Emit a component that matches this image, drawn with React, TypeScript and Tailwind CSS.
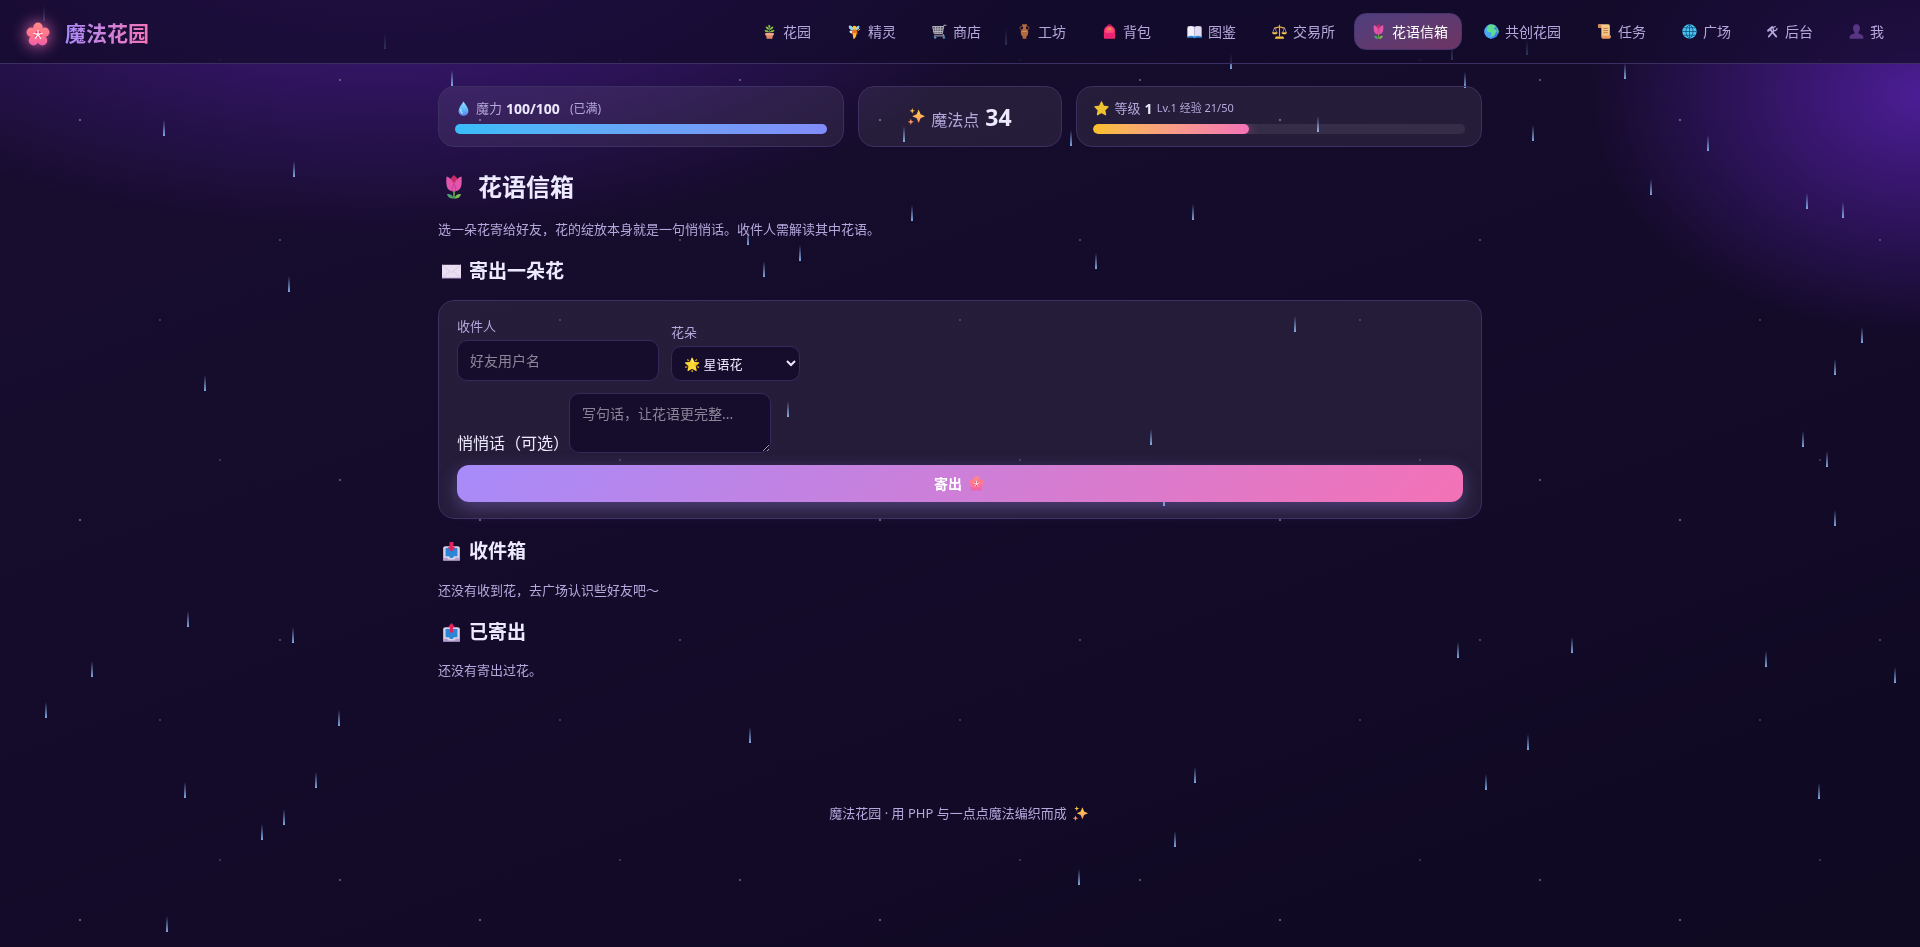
import { useId, type ReactNode } from "react"

interface IconProps {
	className?: string
}

function Blossom({ className = "size-[15px]" }: IconProps) {
	const id = useId()
	return (
		<svg viewBox="0 0 24 24" className={className} aria-hidden="true">
			<defs>
				<linearGradient id={id} x1="0" y1="0" x2="0" y2="24" gradientUnits="userSpaceOnUse">
					<stop offset="0" stopColor="#ff8a8a" />
					<stop offset="0.6" stopColor="#ff7390" />
					<stop offset="1" stopColor="#ee5cab" />
				</linearGradient>
			</defs>
			<g fill={`url(#${id})`}>
				<circle cx="12" cy="5.2" r="4.7" />
				<circle cx="5.2" cy="10.3" r="4.7" />
				<circle cx="18.8" cy="10.3" r="4.7" />
				<circle cx="7.6" cy="18.6" r="4.9" />
				<circle cx="16.4" cy="18.6" r="4.9" />
				<circle cx="12" cy="12.6" r="5" />
			</g>
			<circle cx="12" cy="12.6" r="3.6" fill="#f8486e" />
			<g stroke="#fff" strokeWidth="1.1" strokeLinecap="round">
				<path d="M12 12.6V8.2M12 12.6l4.2-1.3M12 12.6l2.6 3.8M12 12.6l-2.6 3.8M12 12.6l-4.2-1.3" />
			</g>
			<circle cx="12" cy="12.6" r="1.4" fill="#ffe3ee" />
		</svg>
	)
}

function Pot() {
	return (
		<svg viewBox="0 0 24 24" className="size-[15px]" aria-hidden="true">
			<path d="M12 15V4" stroke="#4a7a2a" strokeWidth="1.6" />
			<path d="M12 6c-2-1-3-3-1-5 3 1 3 3 1 5M11.5 9C8 9 5.5 7 6 4c3 0 5 2 5.5 5M12.5 9c3.5 0 6-2 5.5-5-3 0-5 2-5.5 5M11.500 13C7 14 4.5 12 4 9.5c4-.5 6.5 1 7.5 3.5M12.5 13c4.5 1 7-1 7.5-3.500-4-.5-6.5 1-7.5 3.5" fill="#86c440" />
			<path d="M5.5 14.5h13V18H17.5l-1 5.5h-9l-1-5.500H5.5z" fill="#dd8a6b" />
			<path d="M5.5 14.5h13V18h-13z" fill="#f3a788" />
		</svg>
	)
}

function Fairy() {
	return (
		<svg viewBox="0 0 24 24" className="size-[15px]" aria-hidden="true">
			<path d="M11 9C9 3 5 1 3 3c-1 4 3 8 8 6zM13 9c2-6 6-8 7-5 0 4-3 7-7 5z" fill="#8fd4f5" />
			<path d="M4 11c3-1 5-1 7 0l-3 4c-3 0-4-2-4-4" fill="#cfeeff" />
			<circle cx="12" cy="6" r="3.4" fill="#ffc83d" />
			<path d="M8.500 9.500h7L17 16l-4 2-5-2z" fill="#e8731c" />
			<path d="M9 15l5-1 1 5-3 4.500h-2z" fill="#fbb83a" />
			<path d="M17 11l4-3" stroke="#ffc83d" strokeWidth="1.5" />
		</svg>
	)
}

function Cart() {
	return (
		<svg viewBox="0 0 24 24" className="size-[15px]" aria-hidden="true">
			<path d="M1 4h17l-1.500 11.500H3.500z" fill="#55525f" />
			<path d="M1 4h17M2 8h15.500M2.500 12H17M5.500 4l1 11.500M9.500 4v11.500M13.500 4l-.5 11.500M1 4l2.500 11.500h13L19 2h4M17 15.500l2.500 3.500H3" fill="none" stroke="#b9b6c2" strokeWidth="1.5" />
			<circle cx="5" cy="21.5" r="2" fill="#4a90c8" />
			<circle cx="19" cy="21.5" r="2" fill="#4a90c8" />
		</svg>
	)
}

function Vase() {
	return (
		<svg viewBox="0 0 24 24" className="size-[15px]" aria-hidden="true">
			<path d="M9 4C4 3 3.500 8 7.500 10M15 4c5-1 5.500 4 1.500 6" fill="none" stroke="#9a5a3c" strokeWidth="1.6" />
			<path d="M8 .5h8v2l-1.500 1v4c3 1.500 4 4 3.500 7-.5 3.500-2 5.500-3.500 6.500l1 2.500h-7l1-2.500C8 20 6.500 18 6 14.500c-.5-3 .5-5.500 3.500-7v-4L8 2.500z" fill="#b0683f" />
			<path d="M8 12h8" stroke="#d99258" strokeWidth="1.5" />
		</svg>
	)
}

function Backpack() {
	return (
		<svg viewBox="0 0 24 24" className="size-[15px]" aria-hidden="true">
			<path d="M9 4c0-4 6-4 6 0" fill="none" stroke="#b0124f" strokeWidth="1.8" />
			<path d="M3 22V12C3 6 7 2.500 12 2.500S21 6 21 12v10c0 1-.5 1.500-1.500 1.500h-15C3.500 23.500 3 23 3 22" fill="#ec2a6b" />
			<path d="M5 12c0-5 3-8 7-8s7 3 7 8l-2 2H7z" fill="#fb4f7c" />
			<path d="M6 15.500h12v6H6z" fill="#e8207a" />
			<path d="M9 7h6v2H9z" fill="#f6a623" />
		</svg>
	)
}

function Book() {
	return (
		<svg viewBox="0 0 24 24" className="size-[15px]" aria-hidden="true">
			<path d="M0 6h24v16H14l-2 1-2-1H0z" fill="#2f86d6" />
			<path d="M1 4c4-1.500 8-1.200 11 .5v15.500c-3-1.500-7-1.500-11 0z" fill="#f3effb" />
			<path d="M23 4c-4-1.500-8-1.200-11 .5v15.500c3-1.500 7-1.500 11 0z" fill="#e2dcf2" />
			<path d="M12 4.500v15.500" stroke="#b4a9cf" strokeWidth="1" />
		</svg>
	)
}

function Scales() {
	return (
		<svg viewBox="0 0 24 24" className="size-[15px]" aria-hidden="true">
			<path d="M12 1v19M4 6c3 1 5-1.500 8-1.500S17 7 20 6" fill="none" stroke="#e9a93a" strokeWidth="1.8" />
			<path d="M4 6L1 14h7zM20 6l-3 8h6z" fill="none" stroke="#cfc6dc" strokeWidth="1" />
			<path d="M0 13.500h9C8.500 17.500.5 17.500 0 13.500M15 13.500h9c-.5 4-8.500 4-9 0M6 20h12l1.500 3.500h-15z" fill="#fbc23c" />
		</svg>
	)
}

function Tulip({ className = "size-[15px]" }: IconProps) {
	return (
		<svg viewBox="0 0 24 24" className={className} aria-hidden="true">
			<path d="M12 14v9.500" stroke="#5c9e3a" strokeWidth="1.8" />
			<path d="M11.500 23.500C9 24 5.500 22.500 5 19c3.500-.5 6 1.500 6.500 4.500" fill="#4f9e72" />
			<path d="M12.500 23.500c2.500.5 6-1 6.500-4.500-3.500-.5-6 1.500-6.500 4.500" fill="#7cb854" />
			<path d="M9 3l3-3 3 3v8H9z" fill="#c42d68" />
			<path d="M4.500 1.500C7 2 9.500 4 12 9c2.500-5 5-7 7.500-7.500C20 8 20.500 16.500 12 16.500S4 8 4.500 1.500" fill="#e255ab" />
			<path d="M12 9c-2 3-2 5-1.500 7.500M12 9c2 3 2 5 1.500 7.500" stroke="#b93a94" strokeWidth=".8" fill="none" />
		</svg>
	)
}

function Earth() {
	return (
		<svg viewBox="0 0 24 24" className="size-[15px]" aria-hidden="true">
			<circle cx="12" cy="12" r="11.5" fill="#3b82e8" />
			<path d="M.5 12A11.500 11.500 0 0 1 12 .5L9 12l4 9-1 2.500A11.500 11.500 0 0 1 .5 12" fill="#4aa8f0" />
			<path d="M6 2.500C10 0 15 .2 18 2.500l1 3-4 1 5 4-2 5-3 5-3-1-1-6-5-1-2-4 3-4z" fill="#5fdc94" />
			<path d="M20 5c3 3 4 7 3 10l-3-3z" fill="#4fc98d" />
		</svg>
	)
}

function Scroll() {
	return (
		<svg viewBox="0 0 24 24" className="size-[15px]" aria-hidden="true">
			<path d="M3 .5h15c2 0 2.500 1.500 2.500 3v16H7V6H2.500C1 4 1 1 3 .5" fill="#f8c88a" />
			<path d="M2.500 6H7V3C6.500 0 1 0 1.500 3.500 1.500 5 2 6 2.500 6" fill="#d9874f" />
			<path d="M7 18.500h15.500c0 3-1 5-3 5H9c-2-.5-2.500-2.500-2-5" fill="#e89c5f" />
			<path d="M10 7h7.500M10 10.500h7.500M10 14h7.500" stroke="#c07a48" strokeWidth="1.5" />
		</svg>
	)
}

function Globe() {
	return (
		<svg viewBox="0 0 24 24" className="size-[15px]" aria-hidden="true">
			<circle cx="12" cy="12" r="11.5" fill="#4cc2f1" />
			<path d="M12 .5v23M.5 12h23M2.500 6h19M2.500 18h19M12 .5C4.500 6 4.500 18 12 23.500M12 .5c7.500 5.500 7.500 17.500 0 23" fill="none" stroke="#145a86" strokeWidth="1.4" />
		</svg>
	)
}

function Tools() {
	return (
		<svg viewBox="0 0 24 24" className="h-[15px] w-[13px]" aria-hidden="true">
			<g fill="none" stroke="#b5a8dc" strokeLinecap="round">
				<path d="M8.500 9L19 21.500" strokeWidth="3.400" />
				<path d="M4 10.500L11.500 4" strokeWidth="4" />
				<path d="M5 21.500l9.500-11" strokeWidth="3" />
				<path d="M20.500 6.500c-.5 3.500-4.500 5-6.500 3s-.5-6 3-6.500" strokeWidth="2.400" />
			</g>
		</svg>
	)
}

function Person() {
	return (
		<svg viewBox="0 0 24 24" className="size-[15px]" aria-hidden="true">
			<path d="M12 .5c4 0 5.500 3 5.500 6.500S15 13 15 14.500c0 1.500 8 2 8 6.500v2.500H1V21c0-4.500 8-5 8-6.500C9 13 6.500 10.500 6.500 7S8 .5 12 .5" fill="#573584" />
		</svg>
	)
}

function Drop() {
	const id = useId()
	return (
		<svg viewBox="0 0 24 24" className="size-[17px]" aria-hidden="true">
			<defs>
				<linearGradient id={id} x1="0" y1="0" x2="0" y2="1">
					<stop offset="0" stopColor="#8be6ff" />
					<stop offset="0.6" stopColor="#5fb8f5" />
					<stop offset="1" stopColor="#5d78ea" />
				</linearGradient>
			</defs>
			<path d="M12 2c3 4.500 7 9 7 13.500a7 7 0 0 1-14 0C5 11 9 6.500 12 2" fill={`url(#${id})`} />
			<path d="M8.500 13c-1 3 .5 5 2 5.500" stroke="#b8f1ff" strokeWidth="1.5" fill="none" strokeLinecap="round" />
		</svg>
	)
}

function Sparkles({ className = "size-[17px]" }: IconProps) {
	const id = useId()
	return (
		<svg viewBox="0 0 24 24" className={className} aria-hidden="true">
			<defs>
				<linearGradient id={id} x1="0" y1="0" x2="0" y2="24" gradientUnits="userSpaceOnUse">
					<stop offset="0" stopColor="#ffd23d" />
					<stop offset="0.55" stopColor="#ffb25a" />
					<stop offset="1" stopColor="#f47a68" />
				</linearGradient>
			</defs>
			<path d="M15 2l2.800 6.700L24 11.500l-6.200 2.800L15 21l-2.800-6.700L6 11.500l6.200-2.800zM6 0l1 3 3 1-3 1-1 3-1-3-3-1 3-1zM4 15l1.200 3.300L8.500 19.500l-3.300 1.200L4 24l-1.200-3.300L-.5 19.500l3.300-1.200z" fill={`url(#${id})`} />
		</svg>
	)
}

function Star() {
	return (
		<svg viewBox="0 0 24 24" className="size-[15px]" aria-hidden="true">
			<path d="M12 1.500l3.200 6.800 7.300 1-5.300 5.200 1.300 7.500L12 18.500 5.500 22l1.300-7.500L1.500 9.300l7.300-1z" fill="#efc22f" stroke="#efc22f" strokeWidth="2" strokeLinejoin="round" />
		</svg>
	)
}

function Envelope() {
	return (
		<svg viewBox="0 0 24 24" className="size-[19px]" aria-hidden="true">
			<path d="M0 3.500h24v17H0z" fill="#e9dff2" />
			<path d="M0 20.500L9.500 12M24 20.500L14.500 12M0 3.500l12 10 12-10" fill="none" stroke="#d3c4e2" strokeWidth="1" />
			<path d="M0 19.500h24v1H0z" fill="#c9a9e6" />
		</svg>
	)
}

function Tray({ up = false }: { up?: boolean }) {
	return (
		<svg viewBox="0 0 24 24" className="size-[19px]" aria-hidden="true">
			<path d="M4.500 5.500h15c2 0 3 1 3 2.500v15.500h-21V8c0-1.500 1-2.500 3-2.500" fill="#d9d3e6" />
			<path d="M4.500 7.500h15V18h-4.500c0 3-6 3-6 0H4.500z" fill="#2b86d8" />
			<path d="M1.500 20h5l2 2h7l2-2h5v3.500h-21z" fill="#b49bd3" />
			{up ? (
				<path d="M12 0l4.500 5.500H14V12h-4V5.500H7.500z" fill="#e0245e" />
			) : (
				<path d="M9.500 0h5v6.500h2.500L12 12.500 7 6.500h2.500z" fill="#e0245e" />
			)}
		</svg>
	)
}

// [left, top] of every raindrop
const DROPS = [
	[43, 5], [163, 120], [293, 161], [384, 33], [451, 70], [1005, 29], [1230, 53], [1451, 44],
	[1526, 39], [1624, 63], [903, 126], [911, 205], [747, 229], [799, 245], [763, 261], [1070, 130],
	[1317, 116], [1192, 204], [1095, 253], [1464, 72], [787, 401], [638, 426], [1150, 429], [1163, 490],
	[187, 611], [292, 627], [91, 661], [45, 702], [338, 710], [184, 782], [315, 772], [283, 809],
	[261, 824], [166, 916], [1532, 125], [1650, 179], [1707, 135], [1806, 193], [1842, 202], [1861, 327],
	[1834, 359], [1802, 431], [288, 276], [204, 375], [749, 727], [1194, 767], [1174, 831], [1078, 869],
	[1294, 316], [1826, 451], [1834, 510], [1457, 642], [1571, 637], [1765, 651], [1894, 667], [1527, 734],
	[1485, 774], [1818, 783],
]

// [left, top] inside one 400px tile of the night sky
const STARS = [
	[79, 119, "#ffffff55"],
	[339, 79, "#ffffff48"],
	[279, 239, "#ffffff38"],
	[159, 319, "#ffffff2b"],
	[219, 59, "#ffffff2b"],
] as const

function Sky() {
	return (
		<div className="pointer-events-none fixed inset-0 overflow-hidden bg-[radial-gradient(330px_240px_at_100%_10%,#4c1d95,transparent),radial-gradient(680px_330px_at_20%_-10%,#4c1d95,transparent),linear-gradient(160deg,#180d2f,#140b2a_50%,#0f0922)]">
			<svg className="absolute inset-0 size-full" aria-hidden="true">
				<defs>
					<pattern id="stars" width="400" height="400" patternUnits="userSpaceOnUse">
						{STARS.map(([x, y, fill]) => (
							<rect key={x} x={x} y={y} width="2" height="2" fill={fill} />
						))}
					</pattern>
					<linearGradient id="rain" x1="0" y1="0" x2="0" y2="1">
						<stop offset="0" stopColor="#8ab8f5" stopOpacity="0" />
						<stop offset="1" stopColor="#8ab8f5" stopOpacity="0.9" />
					</linearGradient>
				</defs>
				<rect width="100%" height="100%" fill="url(#stars)" />
				{DROPS.map(([x, y]) => (
					<rect key={`${x}-${y}`} x={x} y={y} width="2" height="16" fill="url(#rain)" />
				))}
			</svg>
		</div>
	)
}

const NAV: { label: string; icon: ReactNode; active?: boolean; narrow?: boolean }[] = [
	{ label: "花园", icon: <Pot /> },
	{ label: "精灵", icon: <Fairy /> },
	{ label: "商店", icon: <Cart /> },
	{ label: "工坊", icon: <Vase /> },
	{ label: "背包", icon: <Backpack /> },
	{ label: "图鉴", icon: <Book /> },
	{ label: "交易所", icon: <Scales /> },
	{ label: "花语信箱", icon: <Tulip />, active: true },
	{ label: "共创花园", icon: <Earth /> },
	{ label: "任务", icon: <Scroll /> },
	{ label: "广场", icon: <Globe /> },
	{ label: "后台", icon: <Tools />, narrow: true },
	{ label: "我", icon: <Person /> },
]

function Header() {
	return (
		<header className="relative flex h-16 items-center justify-between border-b border-[#3c2d63] bg-[#130b2b]/75 px-[22px]">
			<a href="#" className="flex items-center gap-[11px] pt-1 text-[21px] font-bold">
				<span className="flex w-8 justify-center">
					<Blossom className="size-6 drop-shadow-[0_0_8px_#f472b6]" />
				</span>
				<span className="bg-linear-to-r from-[#a78bfa] to-[#f472b6] bg-clip-text text-transparent">魔法花园</span>
			</a>
			<nav className="flex gap-[5px] text-sm">
				{NAV.map(({ label, icon, active, narrow }) => (
					<a
						key={label}
						href="#"
						className={
							active
								? "flex h-[37px] items-center gap-1 rounded-xl border border-[#463570] bg-linear-to-br from-[#a78bfa]/40 to-[#f472b6]/40 px-[13px] text-white"
								: "flex h-[37px] items-center gap-1 rounded-xl px-3.5 text-[#b5a8dc]"
						}
					>
						<span className={narrow ? "flex w-[17px] justify-center" : "flex w-5 justify-center"}>{icon}</span>
						{label}
					</a>
				))}
			</nav>
		</header>
	)
}

function Stats() {
	return (
		<section className="grid grid-cols-[2fr_1fr_2fr] gap-3.5 text-[#b5a8dc]">
			<div className="rounded-2xl border border-[#3c2f62] bg-white/7 px-4 py-3">
				<div className="mb-1.5 flex h-[19px] items-center gap-1 text-[13px]">
					<Drop />
					魔力
					<b className="text-sm text-[#ede9fe]">100/100</b>
					<small className="ml-1.5 text-xs">(已满)</small>
				</div>
				<div className="h-2.5 rounded-full bg-linear-to-r from-[#38bdf8] to-[#818cf8]" />
			</div>
			<div className="flex items-center justify-center rounded-2xl border border-[#3c2f62] bg-white/7">
				<p className="flex items-baseline gap-1.5 text-base">
					<Sparkles className="size-[17px] self-center" />
					魔法点
					<b className="text-[23px] leading-8 text-[#ede9fe]">34</b>
				</p>
			</div>
			<div className="rounded-2xl border border-[#3c2f62] bg-white/7 px-4 py-3">
				<div className="mb-1.5 flex h-[19px] items-center gap-1 text-[13px]">
					<span className="flex w-[18px] justify-center">
						<Star />
					</span>
					等级
					<b className="text-sm text-[#ede9fe]">1</b>
					<small className="text-[11px]">Lv.1 经验 21/50</small>
				</div>
				<div className="h-2.5 overflow-hidden rounded-full bg-white/8">
					<div className="h-full w-[42%] rounded-full bg-linear-to-r from-[#fbbf24] to-[#f472b6] shadow-[0_0_12px_#f472b680]" />
				</div>
			</div>
		</section>
	)
}

function SectionTitle({ icon, children }: { icon: ReactNode; children: ReactNode }) {
	return (
		<h2 className="mt-[18px] flex items-center gap-[5px] text-[19px] leading-7 font-bold">
			<span className="flex w-[26px] justify-center">{icon}</span>
			{children}
		</h2>
	)
}

function SendForm() {
	return (
		<form
			className="mt-[15px] flex flex-col gap-3 rounded-2xl border border-[#3c2f62] bg-white/7 px-[18px] py-4"
			onSubmit={(e) => e.preventDefault()}
		>
			<div className="flex items-end gap-3 text-[13px]">
				<label className="flex flex-col gap-1 text-[#b5a8dc]">
					<span className="leading-[19px]">收件人</span>
					<input
						placeholder="好友用户名"
						className="h-[41px] w-[202px] rounded-[10px] border border-[#35295c] bg-[#160d2d] px-3 text-sm text-[#ede9fe] placeholder:text-[#8b8598]"
					/>
				</label>
				<label className="flex flex-col gap-1 text-[#b5a8dc]">
					<span className="leading-[19px]">花朵</span>
					<select className="h-[35px] w-[129px] rounded-[10px] border border-[#35295c] bg-[#160d2d] px-2 text-[13px] text-[#ede9fe]">
						<option>🌟 星语花</option>
					</select>
				</label>
			</div>
			<label className="flex items-end">
				<span className="leading-5">悄悄话（可选）</span>
				<textarea
					placeholder="写句话，让花语更完整..."
					className="h-[60px] w-[202px] rounded-[10px] border border-[#35295c] bg-[#160d2d] px-3 py-2.5 text-sm text-[#ede9fe] placeholder:text-[#8b8598]"
				/>
			</label>
			<button className="flex h-[37px] items-center justify-center gap-1 rounded-xl bg-linear-[135deg] from-[#a78bfa] to-[#f472b6] text-sm font-bold text-white shadow-[0_6px_18px_#a78bfa59]">
				寄出
				<span className="flex w-5 justify-center">
					<Blossom />
				</span>
			</button>
		</form>
	)
}

export default function App() {
	return (
		<div
			lang="zh-CN"
			className="min-h-screen bg-[#120a27] font-['Noto_Sans','Noto_Sans_CJK_SC',sans-serif] text-[#ede9fe]"
		>
			<Sky />
			<Header />
			<main className="relative mx-auto max-w-[1100px] px-7 pt-[22px]">
				<Stats />
				<h1 className="mt-[22px] flex items-center gap-2 text-2xl leading-9 font-bold">
					<span className="flex w-8 justify-center">
						<Tulip className="size-6" />
					</span>
					花语信箱
				</h1>
				<p className="mt-3.5 text-[13px] leading-5 text-[#b5a8dc]">
					选一朵花寄给好友，花的绽放本身就是一句悄悄话。收件人需解读其中花语。
				</p>
				<SectionTitle icon={<Envelope />}>寄出一朵花</SectionTitle>
				<SendForm />
				<SectionTitle icon={<Tray />}>收件箱</SectionTitle>
				<p className="mt-[15px] text-[13px] leading-5 text-[#b5a8dc]">还没有收到花，去广场认识些好友吧～</p>
				<SectionTitle icon={<Tray up />}>已寄出</SectionTitle>
				<p className="mt-3.5 text-[13px] leading-5 text-[#b5a8dc]">还没有寄出过花。</p>
			</main>
			<footer className="relative flex items-center justify-center gap-1 pt-[123px] pb-10 text-[13px] leading-5 text-[#b5a8dc]">
				魔法花园 · 用 PHP 与一点点魔法编织而成
				<span className="flex w-5 justify-center">
					<Sparkles className="size-[15px]" />
				</span>
			</footer>
		</div>
	)
}
